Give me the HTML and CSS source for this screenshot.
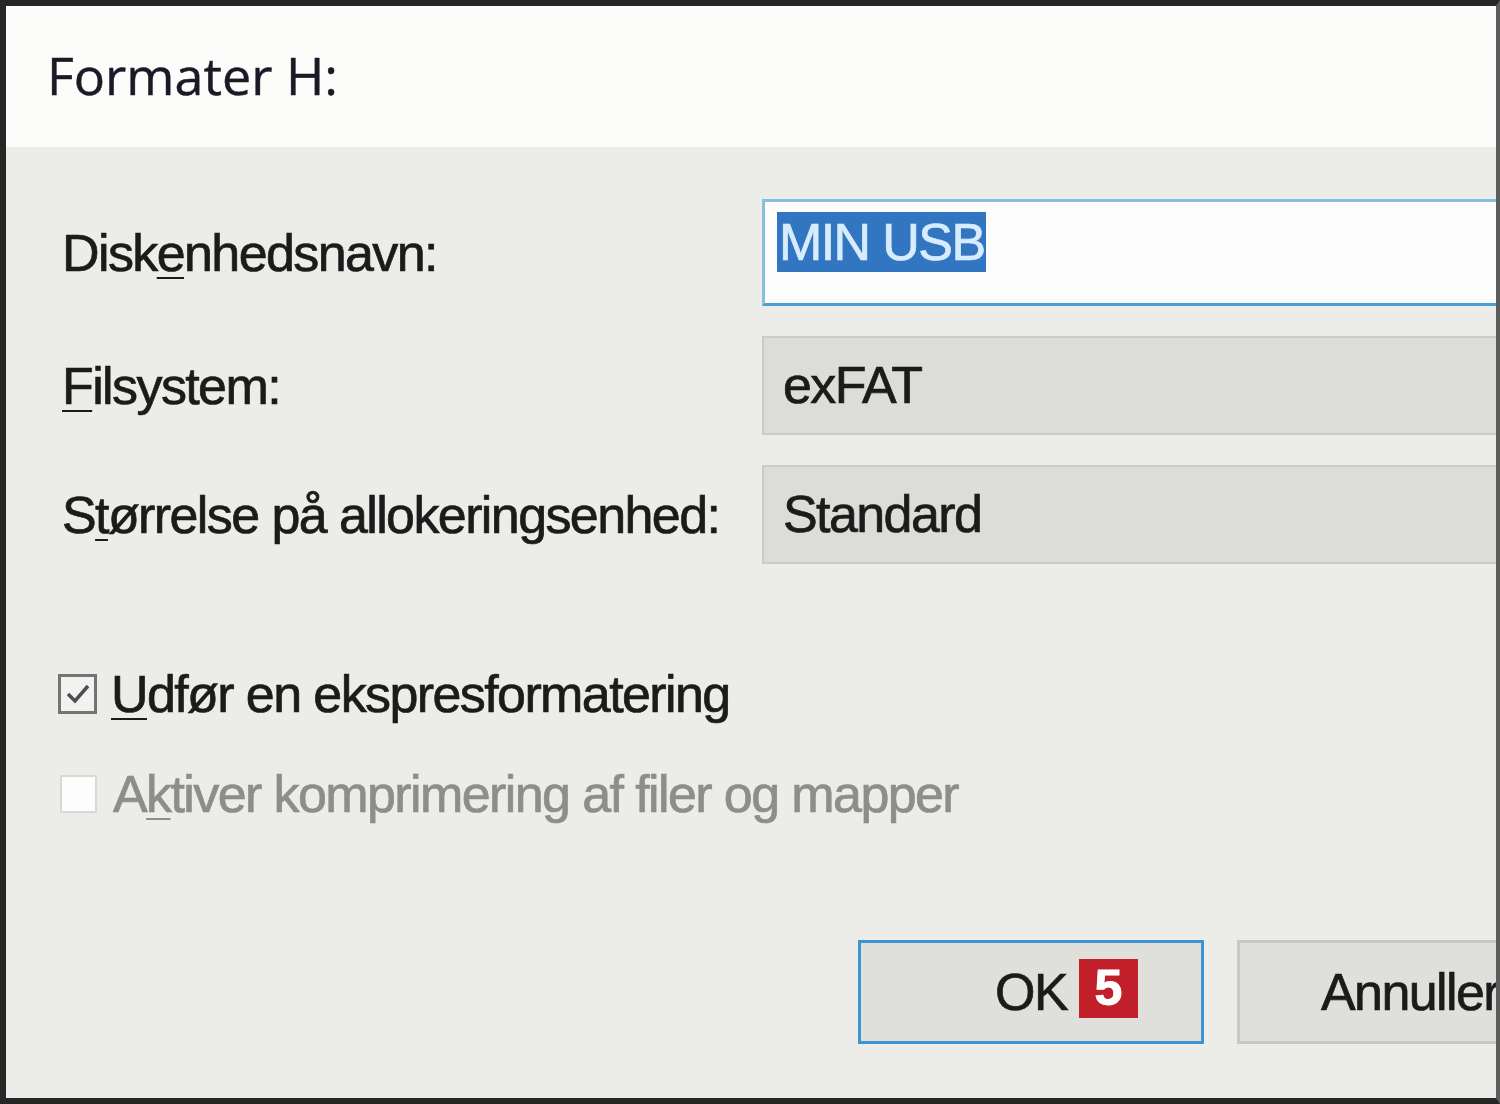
FILE: index.html
```html
<!DOCTYPE html>
<html lang="da">

<head>
    <meta charset="UTF-8">
    <title>Formater H:</title>
    <link rel="stylesheet" href="styles.css">
</head>

<body>
    <div class="dialog">
        <div class="titlebar">Formater H:</div>

        <div class="content">
            <div class="fields">
                <label for="volname">Disk<u>e</u>nhedsnavn:</label>
                <div class="textbox" id="volname"><span class="selected">MIN USB</span></div>

                <label for="fs"><u>F</u>ilsystem:</label>
                <div class="dropdown" id="fs">exFAT</div>

                <label for="unit">S<u>t</u>ørrelse på allokeringsenhed:</label>
                <div class="dropdown" id="unit">Standard</div>
            </div>

            <div class="options">
                <div class="option">
                    <span class="check checked">
                        <svg width="30" height="30" viewBox="0 0 30 30">
                            <polyline points="5,15 12,22 25,7" fill="none" stroke="#4e4e4e" stroke-width="3.5" />
                        </svg>
                    </span>
                    <span><u>U</u>dfør en ekspresformatering</span>
                </div>
                <div class="option disabled">
                    <span class="check"></span>
                    <span>A<u>k</u>tiver komprimering af filer og mapper</span>
                </div>
            </div>

            <div class="buttons">
                <button class="btn default">OK<span class="badge">5</span></button>
                <button class="btn">Annuller</button>
            </div>
        </div>
    </div>
</body>

</html>
```

FILE: styles.css
```css
body {
    margin: 0;
    background: #2b2b2b;
}

.dialog {
    width: 1500px;
    height: 1104px;
    box-sizing: border-box;
    border: 6px solid #262626;
    border-right: 4px solid #5c5c5c;
    background: #ecece8;
    overflow: hidden;
    font-family: "Liberation Sans", Arial, sans-serif;
    color: #1b1b1b;
}

.titlebar {
    height: 141px;
    box-sizing: border-box;
    background: #fcfcfa;
    padding: 39px 0 0 41px;
    font-family: "Open Sans", sans-serif;
    font-size: 52px;
    line-height: 60px;
    color: #1a1a26;
    -webkit-text-stroke: 0.4px #1a1a26;
}

.content {
    padding: 52px 0 0 56px;
    font-size: 52px;
    letter-spacing: -1.6px;
    -webkit-text-stroke: 0.7px currentColor;
}

u {
    text-decoration-thickness: 2px;
    text-underline-offset: 6px;
}

.fields {
    display: grid;
    grid-template-columns: 700px 800px;
    row-gap: 30px;
    align-items: center;
}

.textbox {
    height: 107px;
    box-sizing: border-box;
    border: 3px solid #86c0e0;
    border-bottom-color: #4a9fd2;
    background: #fdfdfd;
    padding: 10px 0 0 12px;
}

.selected {
    display: inline-block;
    background: #3276c2;
    color: #d8ecff;
    line-height: 60px;
    padding: 0 2px;
}

.dropdown {
    height: 99px;
    box-sizing: border-box;
    border: 2px solid #cbcbc7;
    background: #dcdcd8;
    padding-left: 19px;
    line-height: 95px;
}

.options {
    margin-top: 110px;
    margin-left: -4px;
    display: flex;
    flex-direction: column;
    gap: 60px;
}

.option {
    display: flex;
    align-items: center;
    gap: 14px;
    height: 40px;
}

.check {
    width: 33px;
    height: 34px;
    border: 2px solid #d8d8d4;
    background: #fdfdfd;
    margin-left: 2px;
    margin-right: 2px;
}

.check.checked {
    width: 33px;
    height: 34px;
    margin: 0;
    border: 3px solid #747474;
    background: #f2f2f0;
    display: flex;
    align-items: center;
    justify-content: center;
}

.disabled {
    color: #8d8d8b;
}

.buttons {
    display: flex;
    gap: 33px;
    margin-top: 126px;
    padding-left: 796px;
}

.btn {
    position: relative;
    flex: none;
    width: 346px;
    height: 104px;
    border: 3px solid #c8c8c4;
    background: #dfdfdb;
    font-family: "Liberation Sans", Arial, sans-serif;
    font-size: 52px;
    letter-spacing: -1.6px;
    -webkit-text-stroke: 0.7px #1b1b1b;
    color: #1b1b1b;
    padding: 0;
}

.btn.default {
    border-color: #3a95cf;
}

.badge {
    position: absolute;
    left: 218px;
    top: 16px;
    width: 59px;
    height: 59px;
    background: #c1202b;
    color: #ffffff;
    -webkit-text-stroke: 1px #ffffff;
    font-weight: bold;
    font-size: 50px;
    line-height: 59px;
    letter-spacing: 0;
    text-align: center;
}
```
